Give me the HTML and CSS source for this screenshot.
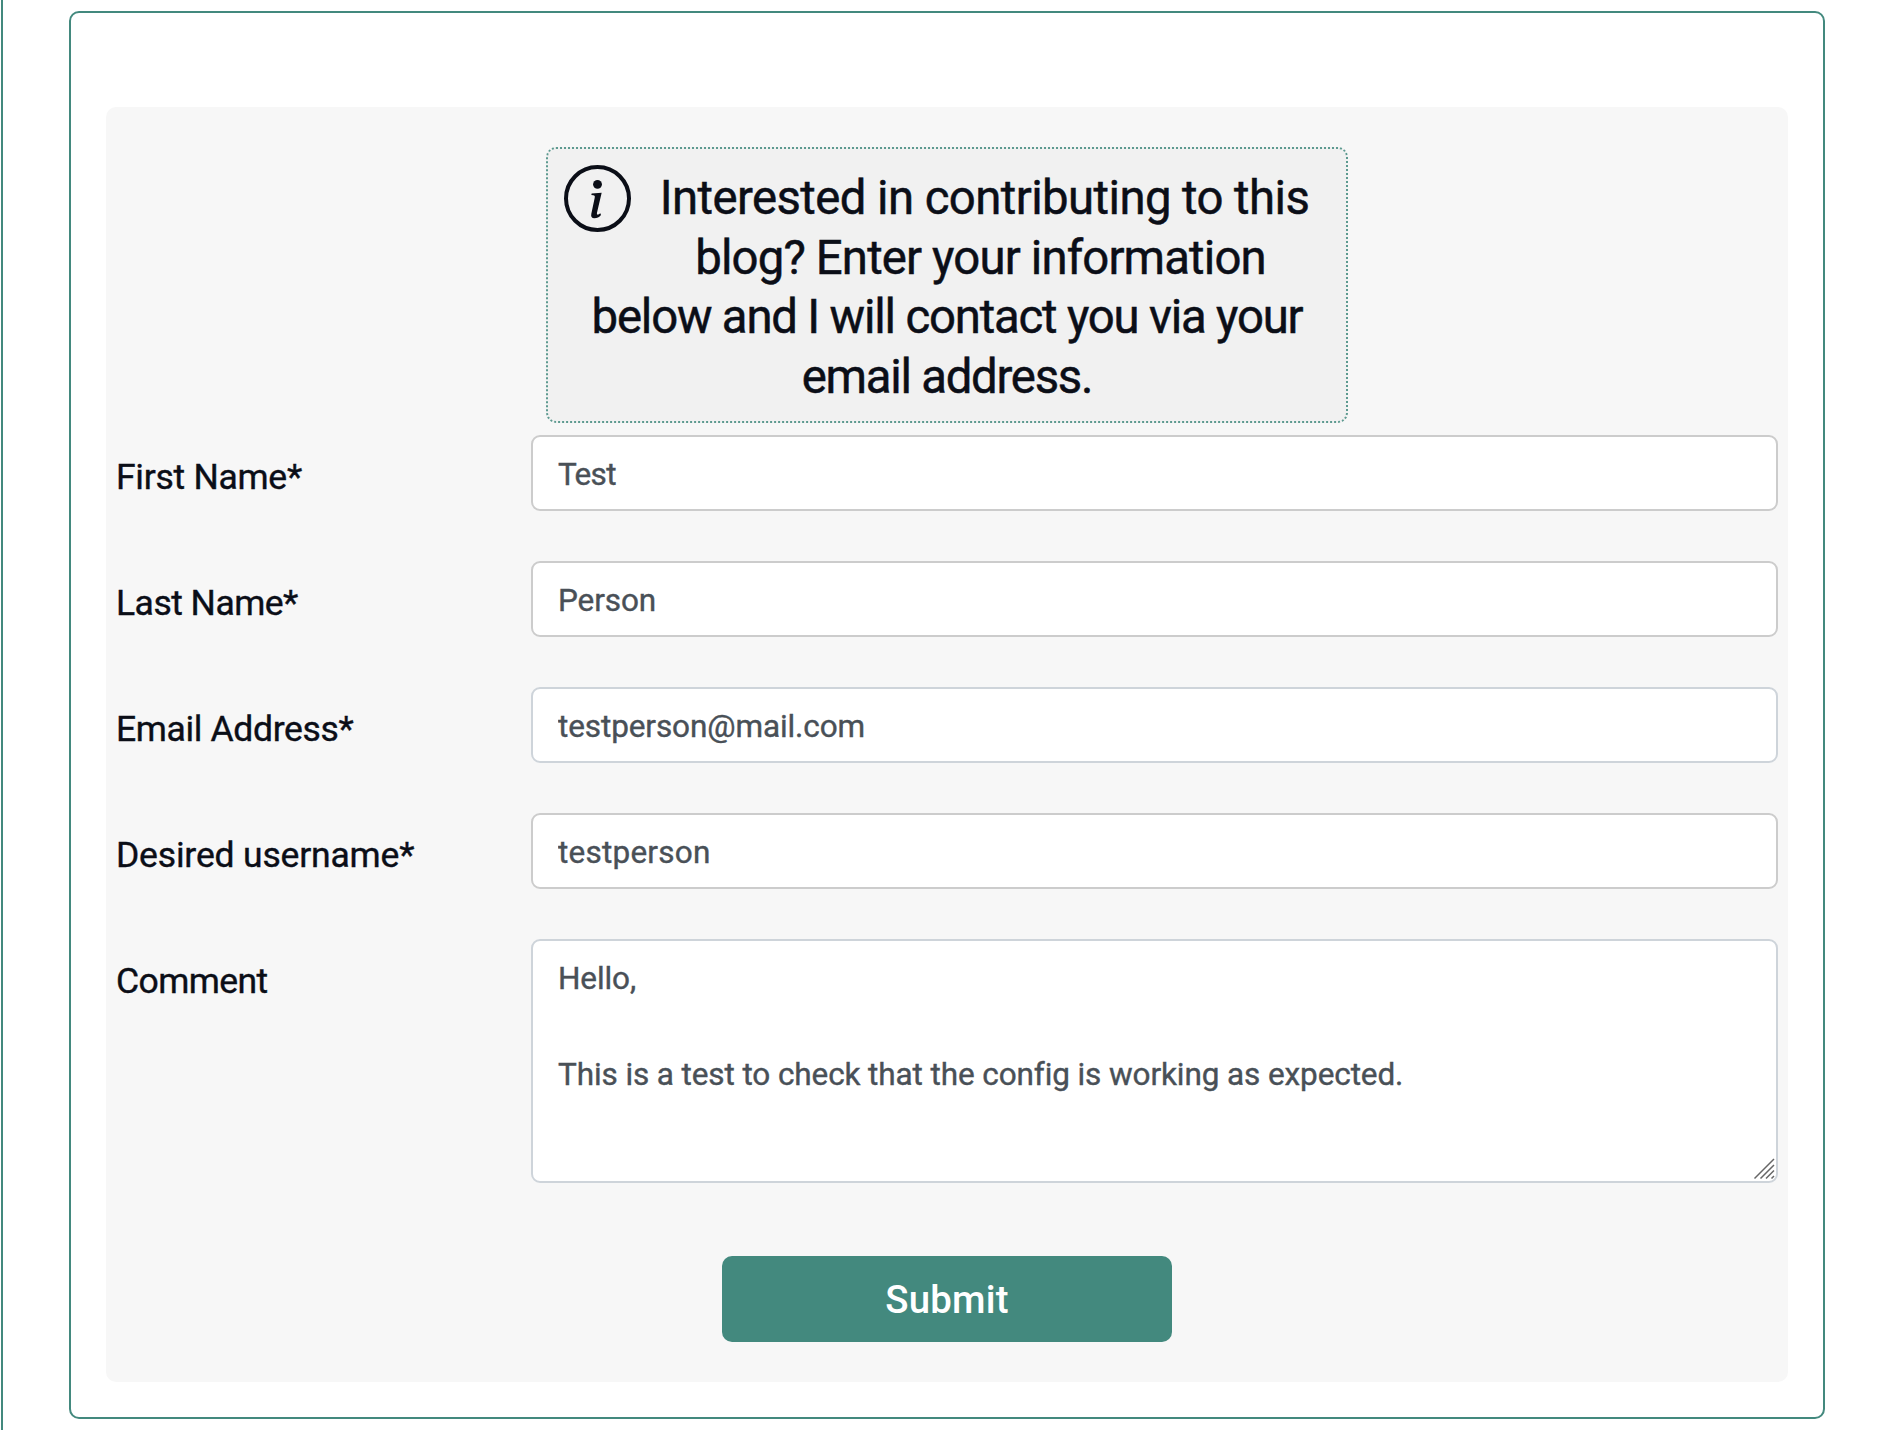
FILE: index.html
```
<!DOCTYPE html>
<html lang="en">
<head>
<meta charset="utf-8">
<title>Contribute</title>
<link rel="stylesheet" href="styles.css">
</head>
<body>
<main class="page">
  <section class="card">
    <form class="panel">
      <div class="info">
        <svg class="info-icon" viewBox="27 29 201 201" aria-hidden="true">
          <circle cx="127.5" cy="129.500" r="94.500" fill="none" stroke="currentColor" stroke-width="12"/>
          <circle cx="127.500" cy="87" r="13.300" fill="currentColor"/>
          <path d="M110 114.500L140 112.500L127 168Q124 178 128 178Q131 178 136 174L138 179Q130 189 118 189Q106 188 109 175L119 128Q121 120 115 120L109 119Z" fill="currentColor"/>
        </svg>
        <p class="info-line line-a">Interested in contributing to this</p>
        <p class="info-line line-b">blog? Enter your information</p>
        <p class="info-line line-c">below and I will contact you via your</p>
        <p class="info-line line-d">email address.</p>
      </div>
      <div class="fields">
        <label class="label label-first" for="first">First Name*</label>
        <input class="control tight" id="first" type="text" value="Test">
        <label class="label label-last" for="last">Last Name*</label>
        <input class="control" id="last" type="text" value="Person">
        <label class="label label-email" for="email">Email Address*</label>
        <input class="control cool" id="email" type="email" value="testperson@mail.com">
        <label class="label label-user" for="user">Desired username*</label>
        <input class="control loose" id="user" type="text" value="testperson">
        <label class="label label-comment" for="comment">Comment</label>
        <div class="area">
          <textarea class="control cool comment" id="comment">Hello,

This is a test to check that the config is working as expected.</textarea>
          <svg class="grip" viewBox="0 0 22 22" aria-hidden="true"><path d="M1.500 20.500L21 1M7.500 20.500L21 7M13 20.500L21 12.500M18.500 20.500L21 18"/></svg>
        </div>
      </div>
      <button class="submit" type="button">Submit</button>
    </form>
  </section>
</main>
</body>
</html>
```
FILE: styles.css
```
* { box-sizing: border-box; }
body {
  margin: 0;
  background: #fff;
  color: #0b0e17;
  font-family: Roboto, "Liberation Sans", sans-serif;
}
.page {
  height: 1430px;
  margin-left: 1px;
  padding: 11px 0 0 66px;
  border-left: 2px solid #43897e;
  overflow: hidden;
}
.card {
  width: 1756px;
  height: 1408px;
  padding: 94px 35px 35px;
  border: 2px solid #43897e;
  border-radius: 10px;
}
.panel {
  display: flex;
  flex-direction: column;
  align-items: center;
  height: 1275px;
  padding: 40px 10px;
  border-radius: 10px;
  background: #f7f7f7;
}
.info {
  width: 802px;
  height: 276px;
  padding: 20px 16px 0;
  border: 2px dotted #5d9a90;
  border-radius: 10px;
  background: #f1f1f1;
}
.info-icon {
  float: left;
  width: 67px;
  height: 67px;
  margin: -4px 8px 0 0;
}
.info-line {
  margin: 0;
  font-size: 47.3px;
  line-height: 59.7px;
  text-align: center;
  white-space: nowrap;
  -webkit-text-stroke: 0.5px currentColor;
}
.line-a { letter-spacing: -0.57px; }
.line-b { padding-right: 8px; letter-spacing: -0.84px; }
.line-c { letter-spacing: -1.19px; }
.line-d { letter-spacing: -1.26px; }
.fields {
  display: grid;
  grid-template-columns: 415px 1247px;
  grid-template-rows: repeat(4, 76px) 244px;
  row-gap: 50px;
  margin-top: 12px;
}
.label {
  padding-top: 18px;
  font-size: 35.5px;
  line-height: 48px;
  -webkit-text-stroke: 0.4px currentColor;
}
.label-first { letter-spacing: -0.27px; }
.label-last { letter-spacing: -0.52px; }
.label-email { letter-spacing: -0.36px; }
.label-user { letter-spacing: -0.18px; }
.label-comment { letter-spacing: -0.6px; }
.control {
  display: block;
  width: 100%;
  height: 76px;
  margin: 0;
  padding: 3px 25px 0;
  border: 2px solid #ccc;
  border-radius: 9px;
  outline: 0;
  background: #fff;
  color: #495057;
  font: 31.5px/48px Roboto, "Liberation Sans", sans-serif;
  letter-spacing: -0.1px;
  -webkit-text-stroke: 0.4px currentColor;
}
.cool { border-color: #ced4da; }
.tight { letter-spacing: -0.7px; }
.loose { letter-spacing: 0.23px; }
.area { position: relative; }
.comment {
  height: 244px;
  padding-top: 14px;
  overflow: hidden;
  resize: none;
}
.grip {
  position: absolute;
  right: 3px;
  bottom: 3px;
  width: 22px;
  height: 22px;
  fill: none;
  stroke: #666;
  stroke-width: 1.5;
}
.submit {
  width: 450px;
  height: 86px;
  margin-top: 73px;
  padding: 2px 0 0;
  border: 0;
  border-radius: 10px;
  background: #43897e;
  color: #fff;
  font: 500 38.4px/48px Roboto, "Liberation Sans", sans-serif;
  letter-spacing: 0.25px;
}
```
